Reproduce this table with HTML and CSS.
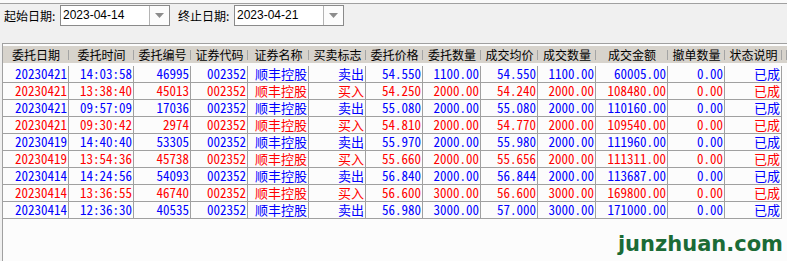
FILE: index.html
```html
<!DOCTYPE html>
<html lang="zh-CN">
<head>
<meta charset="utf-8">
<title>委托查询</title>
<link rel="stylesheet" href="styles.css">
</head>
<body>
<div class="topline"></div>
<div class="toolbar">
  <span class="label">起始日期:</span>
  <div class="combo"><span class="value">2023-04-14</span><span class="btn"><svg width="9" height="5" viewBox="0 0 9 5"><path d="M0 0H9L4.5 5Z" fill="#8c8c8c"/></svg></span></div>
  <span class="label label2">终止日期:</span>
  <div class="combo"><span class="value">2023-04-21</span><span class="btn"><svg width="9" height="5" viewBox="0 0 9 5"><path d="M0 0H9L4.5 5Z" fill="#8c8c8c"/></svg></span></div>
</div>
<div class="panel">
  <div class="head">
    <span>委托日期</span><span>委托时间</span><span>委托编号</span><span>证券代码</span><span>证券名称</span><span>买卖标志</span><span>委托价格</span><span>委托数量</span><span>成交均价</span><span>成交数量</span><span>成交金额</span><span>撤单数量</span><span>状态说明</span><span></span>
  </div>
  <div class="rows">
    <div class="row sell"><span>20230421</span><span>14:03:58</span><span>46995</span><span>002352</span><span>顺丰控股</span><span>卖出</span><span>54.550</span><span>1100.00</span><span>54.550</span><span>1100.00</span><span>60005.00</span><span>0.00</span><span>已成</span></div>
    <div class="row buy"><span>20230421</span><span>13:38:40</span><span>45013</span><span>002352</span><span>顺丰控股</span><span>买入</span><span>54.250</span><span>2000.00</span><span>54.240</span><span>2000.00</span><span>108480.00</span><span>0.00</span><span>已成</span></div>
    <div class="row sell"><span>20230421</span><span>09:57:09</span><span>17036</span><span>002352</span><span>顺丰控股</span><span>卖出</span><span>55.080</span><span>2000.00</span><span>55.080</span><span>2000.00</span><span>110160.00</span><span>0.00</span><span>已成</span></div>
    <div class="row buy"><span>20230421</span><span>09:30:42</span><span>2974</span><span>002352</span><span>顺丰控股</span><span>买入</span><span>54.810</span><span>2000.00</span><span>54.770</span><span>2000.00</span><span>109540.00</span><span>0.00</span><span>已成</span></div>
    <div class="row sell"><span>20230419</span><span>14:40:40</span><span>53305</span><span>002352</span><span>顺丰控股</span><span>卖出</span><span>55.970</span><span>2000.00</span><span>55.980</span><span>2000.00</span><span>111960.00</span><span>0.00</span><span>已成</span></div>
    <div class="row buy"><span>20230419</span><span>13:54:36</span><span>45738</span><span>002352</span><span>顺丰控股</span><span>买入</span><span>55.660</span><span>2000.00</span><span>55.656</span><span>2000.00</span><span>111311.00</span><span>0.00</span><span>已成</span></div>
    <div class="row sell"><span>20230414</span><span>14:24:56</span><span>54093</span><span>002352</span><span>顺丰控股</span><span>卖出</span><span>56.840</span><span>2000.00</span><span>56.844</span><span>2000.00</span><span>113687.00</span><span>0.00</span><span>已成</span></div>
    <div class="row buy"><span>20230414</span><span>13:36:55</span><span>46740</span><span>002352</span><span>顺丰控股</span><span>买入</span><span>56.600</span><span>3000.00</span><span>56.600</span><span>3000.00</span><span>169800.00</span><span>0.00</span><span>已成</span></div>
    <div class="row sell"><span>20230414</span><span>12:36:30</span><span>40535</span><span>002352</span><span>顺丰控股</span><span>卖出</span><span>56.980</span><span>3000.00</span><span>57.000</span><span>3000.00</span><span>171000.00</span><span>0.00</span><span>已成</span></div>
  </div>
  <div class="mark">junzhuan.com</div>
</div>
</body>
</html>
```
FILE: styles.css
```css
html, body {
  margin: 0;
  padding: 0;
}
body {
  width: 787px;
  height: 261px;
  overflow: hidden;
  background: #f0f0f0;
  display: flex;
  flex-direction: column;
  font-family: "Noto Sans CJK SC", sans-serif;
  color: #000;
}
.topline {
  flex: none;
  height: 3px;
  background: #fafafa;
  border-bottom: 1px solid #a0a0a0;
}
.toolbar {
  flex: none;
  height: 39px;
  box-sizing: border-box;
  padding: 1px 0 0 4px;
  display: flex;
  align-items: flex-start;
}
.label {
  width: 56px;
  height: 21px;
  line-height: 21px;
  font-size: 12px;
  white-space: nowrap;
}
.label2 {
  margin-left: 8px;
}
.combo {
  width: 110px;
  height: 21px;
  box-sizing: border-box;
  border: 1px solid #8a8a8a;
  background: #fff;
  display: flex;
}
.value {
  flex: 1;
  padding-left: 2px;
  font: 12px/19px "Liberation Sans", Arial, sans-serif;
}
.btn {
  width: 20px;
  box-sizing: border-box;
  border-left: 1px solid #b4b4b4;
  background: #fcfcfc;
  display: flex;
  align-items: center;
  justify-content: center;
}
.panel {
  flex: 1;
  min-height: 0;
  margin-left: 2px;
  border-left: 1px solid #a0a0a0;
  border-top: 1px solid #a0a0a0;
  background: #fcfcfc;
  padding-top: 2px;
  display: flex;
  flex-direction: column;
}
.head {
  flex: none;
  display: grid;
  grid-template-columns: 66px 65px 57px 57px 61px 57px 57px 58px 57px 58px 72px 57px 57px 1fr;
  height: 17px;
  background: #d7d3cc;
}
.head span {
  font-size: 12px;
  line-height: 17px;
  text-align: center;
  white-space: nowrap;
  background: linear-gradient(#a4a4a4, #a4a4a4) right center / 1px 10px no-repeat;
}
.rows {
  flex: none;
  margin-top: 3px;
}
.row {
  display: grid;
  grid-template-columns: 66px 65px 57px 57px 61px 57px 57px 58px 57px 58px 72px 57px 57px;
  font-size: 13px;
  font-feature-settings: "hwid" 1;
}
.row span {
  height: 17px;
  box-sizing: border-box;
  border-right: 1px solid #a0a0a0;
  border-bottom: 1px solid #a0a0a0;
  text-align: right;
  padding-right: 1px;
  line-height: 16px;
  white-space: nowrap;
}
.sell {
  color: #0000ff;
}
.buy {
  color: #ff0000;
}
.mark {
  margin-top: auto;
  text-align: right;
  padding: 0 4px 5px 0;
  font: bold 21px/24px "DejaVu Sans", sans-serif;
  color: #1b6b36;
}
```
